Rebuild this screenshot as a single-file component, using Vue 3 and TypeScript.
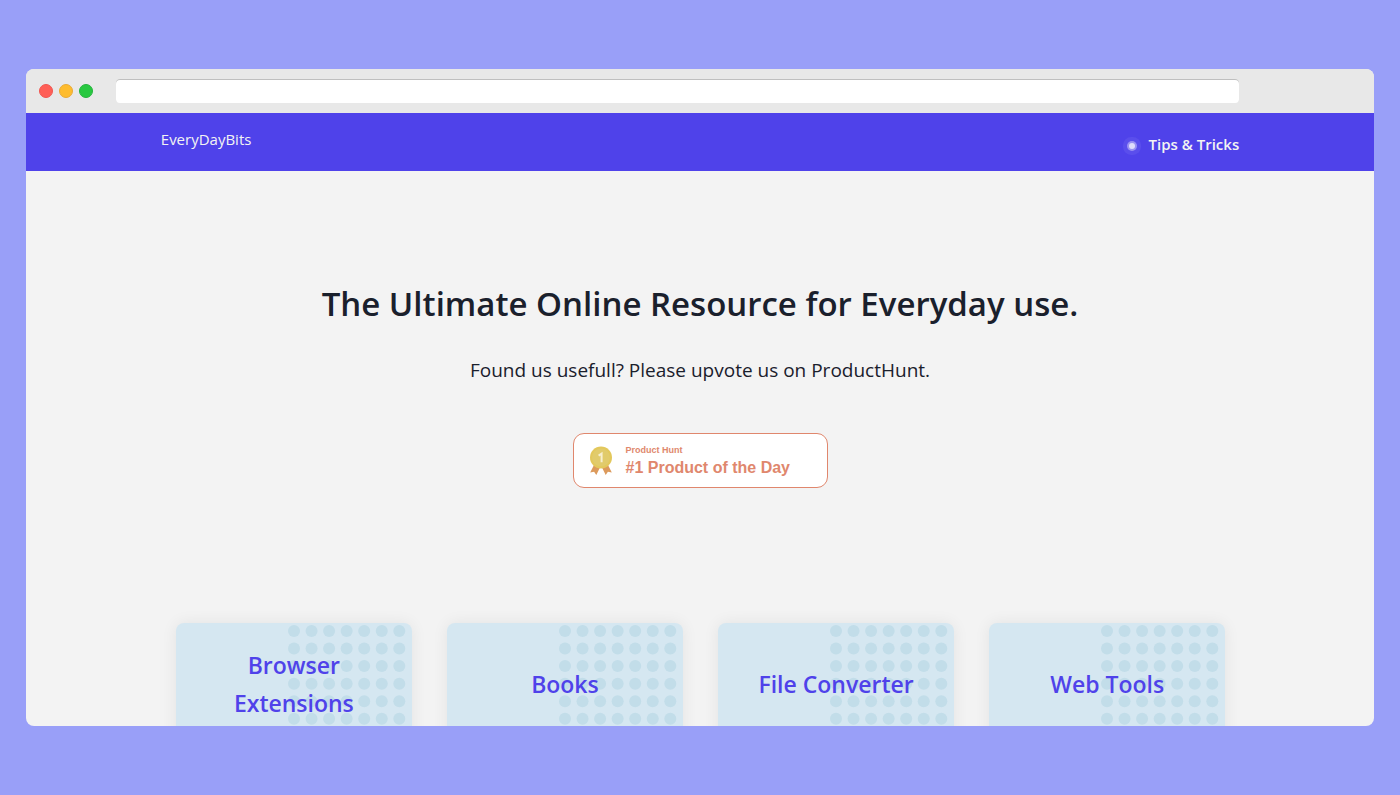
<script setup lang="ts">
import { ref } from 'vue'

interface Category {
  title: string
  href: string
}

interface Dot {
  id: string
  x: number
  y: number
}

const address = ref('')

const categories: Category[] = [
  { title: 'Browser Extensions', href: '#browser-extensions' },
  { title: 'Books', href: '#books' },
  { title: 'File Converter', href: '#file-converter' },
  { title: 'Web Tools', href: '#web-tools' },
]

const DOT_PITCH = 17.55
const dots: Dot[] = Array.from({ length: 49 }, (_, i) => ({
  id: `dot-${i}`,
  x: 6 + (i % 7) * DOT_PITCH,
  y: 8 + Math.floor(i / 7) * DOT_PITCH,
}))
</script>

<template>
  <div class="stage">
    <div class="window">
      <div class="chrome">
        <div class="lights">
          <span class="light close"></span>
          <span class="light minimise"></span>
          <span class="light expand"></span>
        </div>
        <input v-model="address" class="address" type="text" aria-label="Address" />
      </div>

      <header class="header">
        <div class="container header-row">
          <a class="brand" href="#">EveryDayBits</a>
          <a class="tips" href="#tips">
            <span class="pulse"></span>
            Tips &amp; Tricks
          </a>
        </div>
      </header>

      <main class="page">
        <section class="hero">
          <h1 class="title">The Ultimate Online Resource for Everyday use.</h1>
          <p class="subtitle">Found us usefull? Please upvote us on ProductHunt.</p>
          <a class="badge" href="#producthunt">
            <svg class="medal" viewBox="0 0 24 30" aria-hidden="true">
              <path d="M5.5 18 1.2 26.6l3.9-.9 2.2 3.4 4.2-8.6z" fill="#dc9a5c" />
              <path d="M18.5 18 22.8 26.6l-3.9-.9-2.2 3.4-4.2-8.6z" fill="#dc9a5c" />
              <circle cx="12" cy="11.5" r="11" fill="#e3c85c" />
              <circle cx="12" cy="11.5" r="9" fill="#e1cb6b" />
              <path d="M9.6 9.6 12.6 7.6V16.2" fill="none" stroke="#f7efcf" stroke-width="2" />
            </svg>
            <span class="badge-text">
              <span class="badge-name">Product Hunt</span>
              <span class="badge-rank">#1 Product of the Day</span>
            </span>
          </a>
        </section>

        <nav class="container cards" aria-label="Categories">
          <a v-for="category in categories" :key="category.title" class="card" :href="category.href">
            <svg class="dots" viewBox="0 0 124 122" aria-hidden="true">
              <circle v-for="dot in dots" :key="dot.id" :cx="dot.x" :cy="dot.y" r="6" fill="#c2dde9" />
            </svg>
            <span class="card-title">{{ category.title }}</span>
          </a>
        </nav>
      </main>
    </div>
  </div>
</template>

<style>
body {
  margin: 0;
}
</style>

<style scoped>
.stage {
  box-sizing: border-box;
  display: flex;
  height: 100vh;
  padding: 69px 26px;
  background: #999ff8;
  color: #1a202c;
  font-family: 'Segoe UI', 'Open Sans', 'Noto Sans', sans-serif;
}

.window {
  display: flex;
  flex: 1;
  flex-direction: column;
  min-width: 0;
  overflow: hidden;
  border-radius: 8px;
  background: #f3f3f3;
}

.stage a {
  text-decoration: none;
}

.chrome {
  display: flex;
  flex: none;
  align-items: center;
  gap: 23px;
  box-sizing: border-box;
  height: 44px;
  padding: 0 10% 0 13px;
  background: #e8e8e8;
}

.lights {
  display: flex;
  gap: 6px;
}

.light {
  box-sizing: border-box;
  width: 14px;
  height: 14px;
  border: 1px solid;
  border-radius: 50%;
}

.close {
  border-color: #f15550;
  background: #ff5f57;
}

.minimise {
  border-color: #e9aa35;
  background: #febc2e;
}

.expand {
  border-color: #24b33c;
  background: #28c840;
}

.address {
  flex: 1;
  box-sizing: border-box;
  min-width: 0;
  height: 24px;
  padding: 0 8px;
  border: 0;
  border-radius: 4px;
  outline: 0;
  background: #fff;
  box-shadow: inset 0 1px 0 #bfbfbf;
  font: inherit;
  font-size: 14px;
}

.container {
  box-sizing: border-box;
  width: 80%;
  margin: 0 auto;
}

.header {
  flex: none;
  background: #4f42ea;
}

.header-row {
  display: flex;
  align-items: flex-start;
  justify-content: space-between;
  box-sizing: border-box;
  height: 58px;
  padding-top: 14px;
}

.brand,
.tips {
  color: #f3f3f3;
  font-size: 15px;
  line-height: 24px;
}

.tips {
  display: flex;
  gap: 14px;
  align-items: center;
  margin-top: 5px;
  font-weight: 600;
}

.pulse {
  width: 6px;
  height: 6px;
  margin-top: 4px;
  border-radius: 50%;
  background: #dfdcfb;
  box-shadow: 0 0 0 2px #9a91f3, 0 0 0 6px #5a4eec;
}

.page {
  flex: 1;
  min-height: 0;
}

.hero {
  display: flex;
  flex-direction: column;
  align-items: center;
  padding: 106px 16px 135px;
  text-align: center;
}

.title {
  margin: 0;
  font-size: 33px;
  font-weight: 600;
  line-height: 54px;
}

.subtitle {
  margin: 24px 0 48px;
  font-size: 19px;
  line-height: 30px;
}

.badge {
  display: flex;
  gap: 13px;
  align-items: center;
  box-sizing: border-box;
  width: 255px;
  height: 55px;
  padding: 0 15px;
  border: 1px solid #e0876d;
  border-radius: 11px;
  background: #fff;
  color: #e0876d;
  font-family: 'Liberation Sans', Arial, sans-serif;
  font-weight: 700;
  text-align: left;
}

.medal {
  flex: none;
  width: 24px;
  height: 30px;
}

.badge-text {
  display: flex;
  flex-direction: column;
  white-space: nowrap;
}

.badge-name {
  font-size: 9px;
  line-height: 14px;
}

.badge-rank {
  font-size: 16px;
  line-height: 22px;
}

.cards {
  display: grid;
  grid-template-columns: repeat(4, minmax(0, 1fr));
  gap: 35px;
  padding: 0 14px 0 15px;
}

.card {
  position: relative;
  display: flex;
  align-items: center;
  justify-content: center;
  box-sizing: border-box;
  min-height: 122px;
  padding: 16px 30px;
  border-radius: 8px;
  background: #d5e7f1;
  box-shadow: 0 0 16px rgba(0, 0, 0, 0.07);
  color: #4f42ea;
  font-size: 23px;
  font-weight: 600;
  line-height: 38px;
  text-align: center;
}

.dots {
  position: absolute;
  top: 0;
  right: 0;
  width: 124px;
  height: 122px;
}

.card-title {
  position: relative;
}
</style>
